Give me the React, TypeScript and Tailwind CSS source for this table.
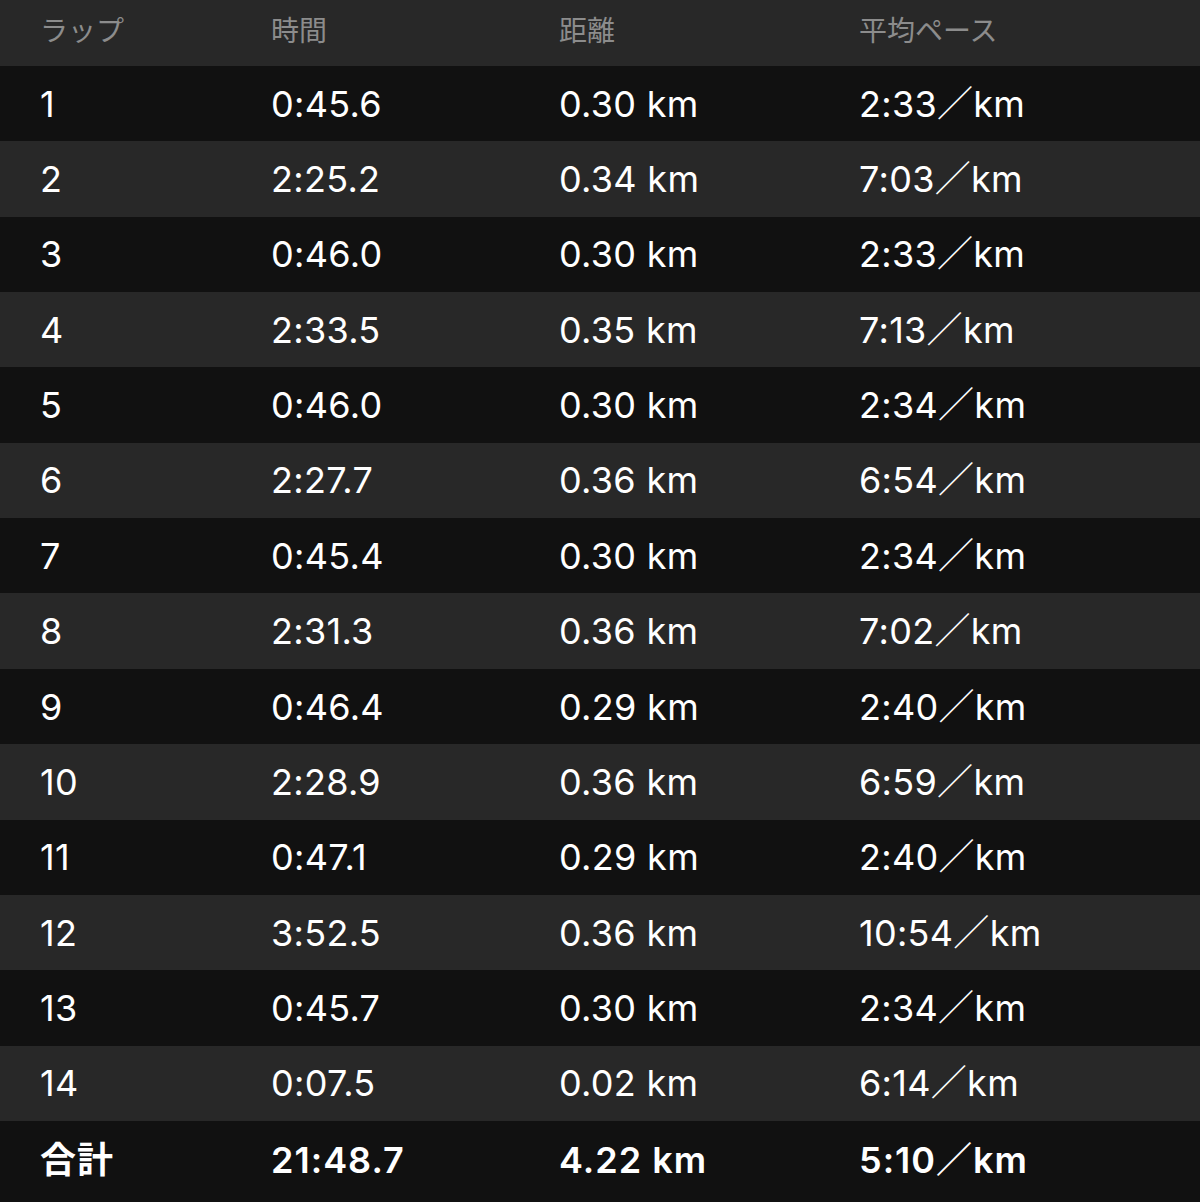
import React from "react";

const rows: [string, string, string, string][] = [
  ["1", "0:45.6", "0.30 km", "2:33／km"],
  ["2", "2:25.2", "0.34 km", "7:03／km"],
  ["3", "0:46.0", "0.30 km", "2:33／km"],
  ["4", "2:33.5", "0.35 km", "7:13／km"],
  ["5", "0:46.0", "0.30 km", "2:34／km"],
  ["6", "2:27.7", "0.36 km", "6:54／km"],
  ["7", "0:45.4", "0.30 km", "2:34／km"],
  ["8", "2:31.3", "0.36 km", "7:02／km"],
  ["9", "0:46.4", "0.29 km", "2:40／km"],
  ["10", "2:28.9", "0.36 km", "6:59／km"],
  ["11", "0:47.1", "0.29 km", "2:40／km"],
  ["12", "3:52.5", "0.36 km", "10:54／km"],
  ["13", "0:45.7", "0.30 km", "2:34／km"],
  ["14", "0:07.5", "0.02 km", "6:14／km"],
];

const cols = "grid grid-cols-[231px_288px_300px_1fr] pl-[40px] items-center";

export default function App() {
  return (
    <div
      className="w-[1200px] h-[1202px] bg-[#111111] grid grid-rows-[66px_repeat(14,minmax(0,1fr))_81px] text-white"
      style={{ fontFamily: 'Inter, "Noto Sans CJK JP", sans-serif' }}
    >
      <div className={`${cols} bg-[#282828] text-[#8c8c8c] text-[28px] pb-[4px]`}>
        <div>ラップ</div>
        <div>時間</div>
        <div>距離</div>
        <div>平均ペース</div>
      </div>
      {rows.map((r, i) => (
        <div
          key={r[0]}
          className={`${cols} ${i % 2 === 0 ? "bg-[#111111]" : "bg-[#282828]"} text-[36px] leading-none tracking-[0.3px]`}
        >
          <div>{r[0]}</div>
          <div>{r[1]}</div>
          <div>{r[2]}</div>
          <div>{r[3]}</div>
        </div>
      ))}
      <div className={`${cols} bg-[#111111] text-[36px] font-semibold leading-none tracking-[1px] pb-[2px]`}>
        <div>合計</div>
        <div>21:48.7</div>
        <div>4.22 km</div>
        <div>5:10／km</div>
      </div>
    </div>
  );
}
